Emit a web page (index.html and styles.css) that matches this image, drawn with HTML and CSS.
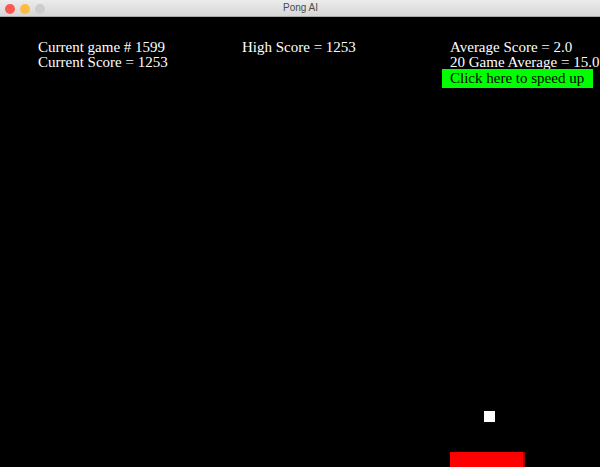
FILE: index.html
```html
<!DOCTYPE html>
<html>
<head>
<meta charset="utf-8">
<title>Pong AI</title>
<link rel="stylesheet" href="styles.css">
</head>
<body>
<div class="window">
  <div class="titlebar">
    <div class="lights">
      <span class="light red"></span>
      <span class="light yellow"></span>
      <span class="light gray"></span>
    </div>
    <div class="title">Pong AI</div>
  </div>
  <div class="game">
    <div class="hud">
      <div class="col col-left">
        <div class="line">Current game # 1599</div>
        <div class="line">Current Score = 1253</div>
      </div>
      <div class="col col-mid">
        <div class="line">High Score = 1253</div>
      </div>
      <div class="col col-right">
        <div class="line indent">Average Score = 2.0</div>
        <div class="line indent">20 Game Average = 15.0</div>
        <div class="speed">Click here to speed up</div>
      </div>
    </div>
    <div class="ball"></div>
    <div class="paddle"></div>
  </div>
</div>
</body>
</html>
```

FILE: styles.css
```css
html, body {
  margin: 0;
  padding: 0;
  width: 600px;
  height: 467px;
  overflow: hidden;
  background: #000;
}

.window {
  width: 600px;
  height: 467px;
  display: flex;
  flex-direction: column;
  overflow: hidden;
}

.titlebar {
  height: 16px;
  flex: 0 0 16px;
  border-bottom: 1px solid #a8a8a8;
  background: linear-gradient(#ececec, #d6d6d6);
  display: flex;
  align-items: center;
  justify-content: center;
  position: relative;
}

.lights {
  position: absolute;
  left: 5px;
  top: 4px;
  display: flex;
  gap: 5px;
}

.light {
  width: 10px;
  height: 10px;
  border-radius: 50%;
  display: block;
}

.red { background: #fc5753; }
.yellow { background: #fdbc40; }
.gray { background: #cdcdcd; }

.title {
  font-family: "Liberation Sans", Arial, sans-serif;
  font-size: 10px;
  color: #4c4c4c;
  line-height: 16px;
  margin-left: 1px;
}

.game {
  flex: 1;
  position: relative;
  background: #000;
  overflow: hidden;
}

.hud {
  display: grid;
  grid-template-columns: 204px 200px 158px;
  padding: 23px 0 0 38px;
  font-family: "Liberation Serif", "Times New Roman", serif;
  font-size: 15px;
  line-height: 15px;
  color: #fff;
  white-space: nowrap;
}

.col {
  display: flex;
  flex-direction: column;
}

.indent {
  padding-left: 8px;
}

.speed {
  box-sizing: border-box;
  width: 151px;
  margin-top: -1px;
  padding: 2px 0 2px 8px;
  background: #00ff00;
  color: #000;
}

.ball {
  position: absolute;
  left: 484px;
  top: 394px;
  width: 11px;
  height: 11px;
  background: #fff;
}

.paddle {
  position: absolute;
  left: 450px;
  top: 435px;
  width: 73px;
  height: 20px;
  background: #ff0000;
  border-right: 2px solid #a00000;
}
```
